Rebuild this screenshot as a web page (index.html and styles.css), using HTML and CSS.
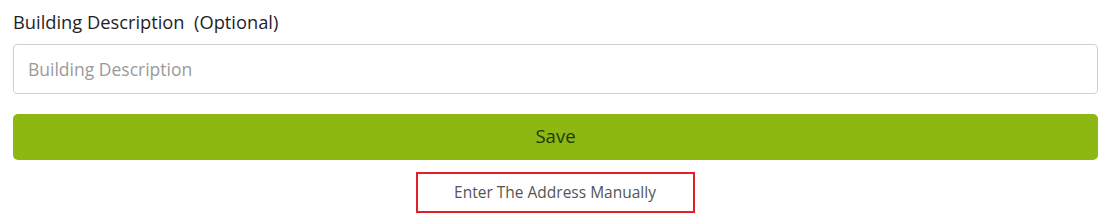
FILE: index.html
```html
<!DOCTYPE html>
<html lang="en">
<head>
    <meta charset="UTF-8">
    <title>Address</title>
    <link rel="stylesheet" href="styles.css">
</head>
<body>
    <div class="form">
        <label class="label" for="building">Building Description&nbsp; (Optional)</label>
        <input class="field" id="building" type="text" placeholder="Building Description">
        <button class="save" type="button">Save</button>
        <div class="manual">
            <a class="manual-link" href="javascript:;">Enter The Address Manually</a>
        </div>
    </div>
</body>
</html>
```

FILE: styles.css
```css
body{margin:0;padding:0;background:#fff;font-family:"Open Sans","Noto Sans",Arial,sans-serif;}
.form{display:flex;flex-direction:column;padding:11px 13px 0 13px;}
.label{font-size:18.3px;line-height:22px;color:#1e1e28;margin-bottom:11px;}
.field{height:50px;box-sizing:border-box;border:1px solid #cfcfcf;border-radius:4px;padding:0 14px;font-family:inherit;font-size:17.5px;color:#333;outline:none;}
.field::placeholder{color:#9a9a9a;}
.save{margin-top:20px;height:46px;padding:0 0 3px 0;border:none;border-radius:5px;background:#8db713;color:#1e3a05;font-family:inherit;font-size:18.5px;cursor:pointer;}
.manual{display:flex;justify-content:center;margin-top:12px;}
.manual-link{display:block;width:279px;height:41px;box-sizing:border-box;border:2px solid #e32028;text-align:center;line-height:37px;font-size:15.5px;color:#555;text-decoration:none;margin-left:-1px;}
```
